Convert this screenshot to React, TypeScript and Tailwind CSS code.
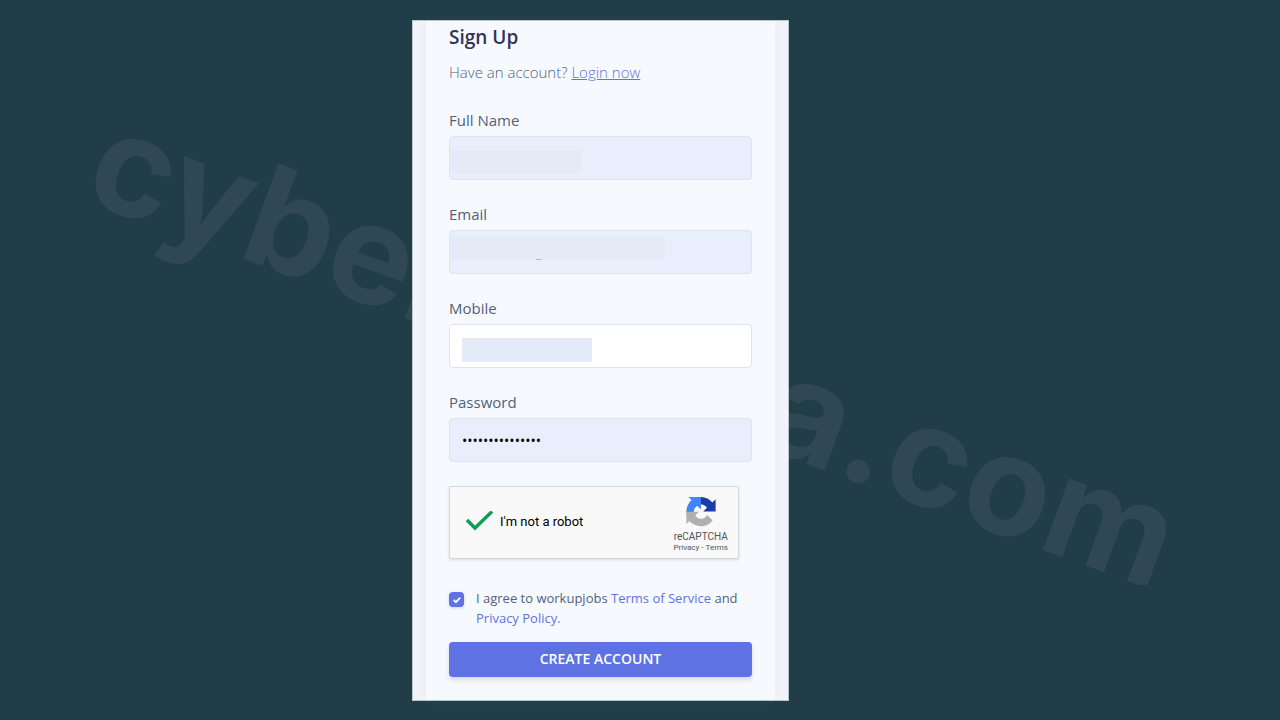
import type { ReactNode } from "react";

type FieldProps = {
  id: string;
  label: string;
  type?: string;
  value?: string;
  filled?: boolean;
  children?: ReactNode;
};

function Field({ id, label, type = "text", value = "", filled = true, children }: FieldProps) {
  return (
    <div>
      <label htmlFor={id} className="block h-7 text-[15px] leading-6 text-[#525f7f]">
        {label}
      </label>
      <div className="relative">
        <input
          id={id}
          type={type}
          defaultValue={value}
          className={`block w-full h-11 px-3 text-sm text-black border border-[#dee4ee] rounded focus:outline-none ${
            filled ? "bg-[#e8eefc]" : "bg-white"
          }`}
        />
        {children}
      </div>
    </div>
  );
}

function RecaptchaLogo() {
  return (
    <svg viewBox="-3 0 70 70" className="w-8 h-8" aria-hidden="true">
      <path
        fill="#1c3aa9"
        d="M64 31.955l-.033-1.37V4.687l-7.16 7.16C50.948 4.674 42.033.093 32.05.093c-10.4 0-19.622 4.96-25.458 12.64l11.736 11.86a15.55 15.55 0 0 1 4.754-5.334c2.05-1.6 4.952-2.906 8.968-2.906.485 0 .86.057 1.135.163 4.976.393 9.288 3.14 11.828 7.124l-8.307 8.307L64 31.953"
      />
      <path
        fill="#4285f4"
        d="M31.862.094l-1.37.033H4.594l7.16 7.16C4.58 13.147 0 22.06 0 32.046c0 10.4 4.96 19.622 12.64 25.458L24.5 45.768a15.55 15.55 0 0 1-5.334-4.754c-1.6-2.05-2.906-4.952-2.906-8.968 0-.485.057-.86.163-1.135.393-4.976 3.14-9.288 7.124-11.828l8.307 8.307L31.86.095"
      />
      <path
        fill="#b0b0b0"
        d="M.001 32.045l.033 1.37v25.898l7.16-7.16c5.86 7.173 14.774 11.754 24.76 11.754 10.4 0 19.622-4.96 25.458-12.64l-11.736-11.86a15.55 15.55 0 0 1-4.754 5.334c-2.05 1.6-4.952 2.906-8.968 2.906-.485 0-.86-.057-1.135-.163-4.976-.393-9.288-3.14-11.828-7.124l8.307-8.307c-10.522.04-22.4.066-27.295-.005"
      />
    </svg>
  );
}

export default function App() {
  return (
    <div className="relative min-h-screen pl-4 pr-[95px] py-5 overflow-hidden bg-[#213d48] font-['Open_Sans',sans-serif]">
      {/* Watermark */}
      <div aria-hidden="true" className="absolute inset-x-0 top-0 h-[585px] overflow-hidden">
        <div className="absolute left-[122px] top-[86px] flex gap-[326px] origin-top-left rotate-20 whitespace-nowrap font-[Inter,sans-serif] font-bold text-[140px] leading-none text-[#2f4853]">
          <span>cyber</span>
          <span>a.com</span>
        </div>
      </div>

      {/* Panel */}
      <main className="relative w-full max-w-[377px] mx-auto px-[13px] bg-[#f3f4fa] border border-[#b9c4ce]">
        <form className="px-[23px] pt-0.5 pb-[23px] bg-[#f6fafe] rounded-b shadow-[0_0_12px_rgba(136,152,170,0.1)]">
          <h1 className="text-[19px] leading-7 font-semibold text-[#32325d]">Sign Up</h1>
          <p className="mt-2 text-[15px] leading-[26px] font-light text-[#525f7f]">
            Have an account?{" "}
            <a href="#login" className="text-[#5e72e4] underline">
              Login now
            </a>
          </p>

          <div className="flex flex-col gap-[22px] mt-[23px]">
            <Field id="name" label="Full Name">
              <span className="absolute left-0.5 top-3.5 w-[130px] h-6 bg-[#e4ebf7]" />
            </Field>
            <Field id="email" label="Email">
              <span className="absolute left-0.5 top-1.5 w-[214px] h-6 bg-[#e4ebf7]" />
              <span className="absolute left-[87px] top-[29px] w-1.5 h-px bg-[#b4bac6]" />
            </Field>
            <Field id="mobile" label="Mobile" filled={false}>
              <span className="absolute left-[13px] top-3.5 w-[130px] h-6 bg-[#e3ebf7]" />
            </Field>
            <Field id="password" label="Password" type="password" value="passwordpasswor" />
          </div>

          {/* Captcha */}
          <div className="flex items-center justify-between max-w-[290px] h-[73px] mt-6 pl-4 pr-2.5 bg-[#f9f9f9] border border-[#d6d8db] rounded-xs shadow-[0_1px_3px_rgba(0,0,0,0.12)] font-[Roboto,sans-serif]">
            <label htmlFor="robot" className="flex items-center gap-1.5 pb-0.5 text-[13px] text-black">
              <input id="robot" type="checkbox" defaultChecked className="sr-only" />
              <svg viewBox="0 0 28 22" className="w-7 h-[22px]" fill="none" aria-hidden="true">
                <path d="M1 9l8 8L26 0.5" stroke="#0f9d58" strokeWidth="3.4" />
              </svg>
              I'm not a robot
            </label>
            <div className="flex flex-col items-center self-start pt-2.5 text-[#555555]">
              <RecaptchaLogo />
              <span className="mt-0.5 text-[10px] leading-3">reCAPTCHA</span>
              <span className="flex gap-0.5 text-[8px] leading-[10px]">
                <a href="#captcha-privacy">Privacy</a>
                <span>-</span>
                <a href="#captcha-terms">Terms</a>
              </span>
            </div>
          </div>

          {/* Terms */}
          <div className="flex gap-3 mt-[29px]">
            <span className="relative w-[15px] h-[15px] mt-1 shrink-0">
              <input
                id="agree"
                type="checkbox"
                defaultChecked
                className="block w-full h-full appearance-none bg-[#5e72e4] rounded shadow-[0_1px_3px_rgba(94,114,228,0.3)]"
              />
              <svg
                viewBox="0 0 8 8"
                className="absolute left-1 top-1 w-2 h-2 pointer-events-none"
                fill="none"
                aria-hidden="true"
              >
                <path d="M0.8 4l2.1 2.1L7.2 1.7" stroke="white" strokeWidth="1.8" />
              </svg>
            </span>
            <label htmlFor="agree" className="text-[13px] leading-5 text-[#525f7f]">
              I agree to workupjobs{" "}
              <a href="#terms" className="text-[#5e72e4]">
                Terms of Service
              </a>{" "}
              and{" "}
              <a href="#privacy" className="inline-block text-[#5e72e4]">
                Privacy Policy.
              </a>
            </label>
          </div>

          <button
            type="submit"
            className="block w-full h-[35px] mt-3.5 pb-0.5 text-sm font-semibold text-white uppercase bg-[#5e72e4] rounded shadow-[0_3px_5px_rgba(50,50,93,0.16)]"
          >
            Create account
          </button>
        </form>
      </main>
    </div>
  );
}
